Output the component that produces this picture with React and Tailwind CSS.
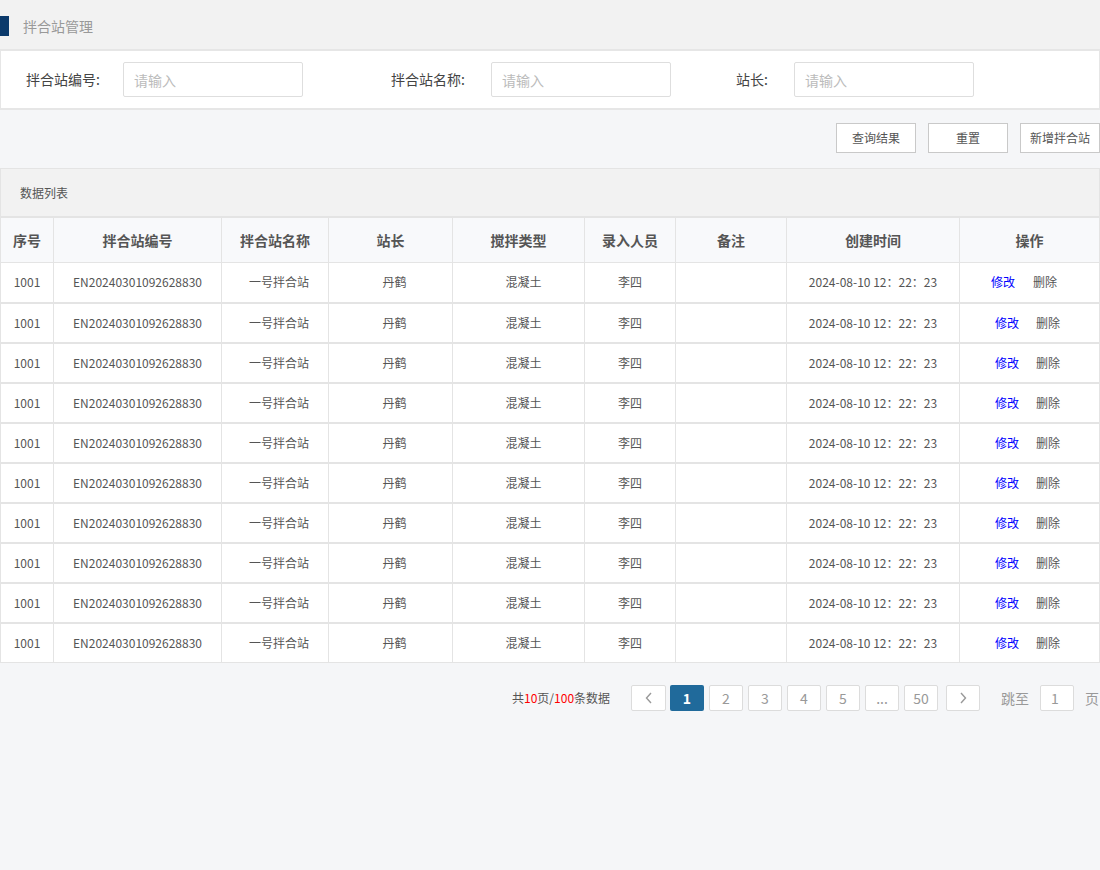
import React from 'react';

const columns = [
  { title: '序号', width: 'w-[53px]' },
  { title: '拌合站编号', width: 'w-[168px]' },
  { title: '拌合站名称', width: 'w-[107px]' },
  { title: '站长', width: 'w-[124px]' },
  { title: '搅拌类型', width: 'w-[132px]' },
  { title: '录入人员', width: 'w-[91px]' },
  { title: '备注', width: 'w-[111px]' },
  { title: '创建时间', width: 'w-[173px]' },
  { title: '操作', width: 'w-[140px]' },
];

const rows = Array.from({ length: 10 }, () => ({
  id: '1001',
  code: 'EN20240301092628830',
  name: '一号拌合站',
  master: '丹鹤',
  type: '混凝土',
  creator: '李四',
  note: '',
  createdAt: '2024-08-10 12：22：23',
}));

const pages = ['1', '2', '3', '4', '5', '...', '50'];

function Field({ label, labelWidth, className }) {
  return (
    <div className={`flex shrink-0 items-center ${className}`}>
      <label className={`shrink-0 text-[14px] text-[#444] ${labelWidth}`}>{label}</label>
      <input
        type="text"
        placeholder="请输入"
        className="h-[35px] w-[180px] rounded-[2px] border border-[#dedede] bg-white px-[10px] text-[14px] text-[#333] outline-none placeholder:text-[#bbb]"
      />
    </div>
  );
}

export default function App() {
  return (
    <div
      className="min-h-[870px] w-[1100px] overflow-hidden bg-[#f5f6f8] text-[#555]"
      style={{ fontFamily: '"Microsoft YaHei", "Noto Sans CJK SC", "Noto Sans", sans-serif' }}
    >
      {/* page title */}
      <div className="flex h-[49px] items-center bg-[#f2f2f2] pt-[3px]">
        <div className="h-[20px] w-[9px] bg-[#0b3a6b]" />
        <h1 className="ml-[14px] text-[14px] text-[#999]">拌合站管理</h1>
      </div>

      {/* filters */}
      <div className="flex h-[61px] items-center border-y-2 border-x border-[#e6e6e6] bg-white">
        <Field label="拌合站编号:" labelWidth="w-[97px]" className="ml-[25px]" />
        <Field label="拌合站名称:" labelWidth="w-[100px]" className="ml-[88px]" />
        <Field label="站长:" labelWidth="w-[58px]" className="ml-[65px]" />
      </div>

      {/* actions */}
      <div className="flex justify-end gap-[12px] pt-[13px] pb-[15px]">
        {['查询结果', '重置', '新增拌合站'].map(t => (
          <button
            key={t}
            className="h-[30px] w-[80px] border border-[#c9c9c9] bg-white text-[12px] text-[#555]"
          >
            {t}
          </button>
        ))}
      </div>

      {/* list title */}
      <div className="flex h-[49px] items-center border border-[#e4e4e4] bg-[#f2f2f2] pl-[19px] text-[12px] text-[#555]">
        数据列表
      </div>

      {/* table */}
      <table className="w-[1100px] table-fixed border-collapse bg-white">
        <colgroup>
          {columns.map(c => (
            <col key={c.title} className={c.width} />
          ))}
        </colgroup>
        <thead>
          <tr className="h-[45px] bg-[#f8f9fb]">
            {columns.map(c => (
              <th key={c.title} className="border border-[#e4e4e4] text-[14px] font-bold text-[#555]">
                {c.title}
              </th>
            ))}
          </tr>
        </thead>
        <tbody className="text-[12px] text-[#555]">
          {rows.map((r, i) => (
            <tr
              key={i}
              className={`h-[40px] text-center ${i < rows.length - 1 ? 'border-b-2' : 'border-b'} border-[#e4e4e4]`}
            >
              <td className="border-x border-[#e4e4e4]">{r.id}</td>
              <td className="border-x border-[#e4e4e4]">{r.code}</td>
              <td className="border-x border-[#e4e4e4] pl-[8px]">{r.name}</td>
              <td className="border-x border-[#e4e4e4] pl-[8px]">{r.master}</td>
              <td className="border-x border-[#e4e4e4] pl-[10px]">{r.type}</td>
              <td className="border-x border-[#e4e4e4]">{r.creator}</td>
              <td className="border-x border-[#e4e4e4]">{r.note}</td>
              <td className="border-x border-[#e4e4e4]">{r.createdAt}</td>
              <td className={`border-x border-[#e4e4e4] text-left ${i === 0 ? 'pl-[31px]' : 'pl-[35px]'}`}>
                <span className={`text-[#0000ff] ${i === 0 ? 'mr-[18px]' : 'mr-[17px]'}`}>修改</span>
                <span className="text-[#555]">删除</span>
              </td>
            </tr>
          ))}
        </tbody>
      </table>

      {/* pagination */}
      <div className="mt-[22px] flex h-[26px] items-center whitespace-nowrap pl-[512px] text-[12px]">
        <span className="w-[101px] shrink-0 text-[#555]">
          共<span className="text-[#ff0000]">10</span>页/<span className="text-[#ff0000]">100</span>条数据
        </span>
        <button className="ml-[18px] mr-[4px] flex h-[26px] w-[35px] shrink-0 items-center justify-center rounded-[2px] border border-[#dcdcdc] bg-white text-[#999]">
          <svg width="10" height="12" viewBox="0 0 10 12" fill="none" stroke="currentColor" strokeWidth="1.4">
            <path d="M7 1 L2.5 6 L7 11" />
          </svg>
        </button>
        <div className="flex shrink-0 gap-[5px]">
          {pages.map(p => (
            <button
              key={p}
              className={
                p === '1'
                  ? 'h-[26px] w-[34px] shrink-0 rounded-[2px] bg-[#206a9b] text-[14px] font-bold text-white'
                  : 'h-[26px] w-[34px] shrink-0 rounded-[2px] border border-[#dcdcdc] bg-white text-[14px] text-[#999]'
              }
            >
              {p}
            </button>
          ))}
        </div>
        <button className="ml-[8px] flex h-[26px] w-[34px] shrink-0 items-center justify-center rounded-[2px] border border-[#dcdcdc] bg-white text-[#999]">
          <svg width="10" height="12" viewBox="0 0 10 12" fill="none" stroke="currentColor" strokeWidth="1.4">
            <path d="M3 1 L7.5 6 L3 11" />
          </svg>
        </button>
        <span className="ml-[21px] shrink-0 text-[14px] text-[#999]">跳至</span>
        <input
          type="text"
          defaultValue="1"
          className="ml-[11px] h-[26px] w-[34px] shrink-0 rounded-[2px] border border-[#dcdcdc] bg-white px-[10px] text-[14px] text-[#999] outline-none"
        />
        <span className="ml-[11px] shrink-0 text-[14px] text-[#999]">页</span>
      </div>
    </div>
  );
}
